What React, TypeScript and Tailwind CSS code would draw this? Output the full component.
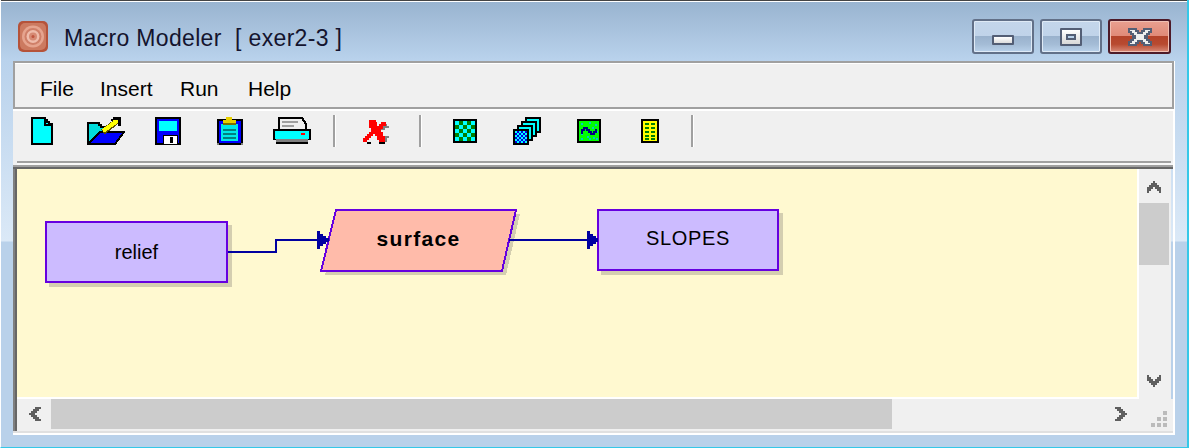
import React from "react";

const font = "font-['Liberation_Sans',Arial,sans-serif]";

function FileIcon() {
  return (
    <svg width="22" height="28" viewBox="0 0 22 28" shapeRendering="crispEdges">
      <path d="M1 1H14V3H16V5H18V7H21V27H1Z" fill="#00ffff" stroke="#000" strokeWidth="2" />
      <path d="M14 1V8H21" fill="none" stroke="#000" strokeWidth="2" />
    </svg>
  );
}
function FolderIcon() {
  return (
    <svg width="38" height="28" viewBox="0 0 38 28" shapeRendering="crispEdges">
      <path d="M1 27V6H12V8H14V10H22V16H13V27Z" fill="#00dcdc" stroke="#000" strokeWidth="2" />
      <path d="M1 27L13 15H37L28 27Z" fill="#0000ff" stroke="#000" strokeWidth="2" />
      <path d="M16 15L30 4" stroke="#605000" strokeWidth="6" />
      <path d="M16 14L30 4" stroke="#ffff00" strokeWidth="4" />
      <path d="M24 2H26V0H31V0H34V9H31V4H24Z" fill="#000" />
      <path d="M26 3H31V5H26Z" fill="#ffff00" />
    </svg>
  );
}
function SaveIcon() {
  return (
    <svg width="26" height="28" viewBox="0 0 26 28" shapeRendering="crispEdges">
      <rect width="26" height="28" fill="#000" />
      <rect x="2" y="2" width="22" height="24" fill="#0000ff" />
      <rect x="4" y="4" width="18" height="10" fill="#00ffff" />
      <rect x="8" y="18" width="15" height="10" fill="#000" />
      <rect x="9" y="19" width="13" height="8" fill="#ffffff" />
      <rect x="15" y="20" width="3" height="6" fill="#000" />
    </svg>
  );
}
function ClipIcon() {
  return (
    <svg width="26" height="28" viewBox="0 0 26 28" shapeRendering="crispEdges">
      <rect x="0" y="2" width="26" height="26" fill="#000" />
      <rect x="0" y="26" width="2" height="2" fill="#808080" />
      <rect x="24" y="26" width="2" height="2" fill="#808080" />
      <rect x="2" y="4" width="22" height="22" fill="#0000ff" />
      <rect x="4" y="7" width="17" height="17" fill="#00e8e8" />
      <rect x="6" y="12" width="13" height="2" fill="#008080" />
      <rect x="6" y="16" width="13" height="2" fill="#008080" />
      <rect x="6" y="20" width="13" height="2" fill="#008080" />
      <rect x="9" y="0" width="6" height="3" fill="#e8d000" />
      <rect x="6" y="3" width="13" height="4" fill="#e8d000" />
      <rect x="6" y="6" width="13" height="2" fill="#807000" />
    </svg>
  );
}
function PrinterIcon() {
  return (
    <svg width="38" height="27" viewBox="0 0 38 27" shapeRendering="crispEdges">
      <path d="M6 13V1H29L33 7V13Z" fill="#f0f0f0" stroke="#000" strokeWidth="2" />
      <rect x="9" y="4" width="16" height="2" fill="#a0a0a0" />
      <rect x="9" y="8" width="12" height="2" fill="#a0a0a0" />
      <rect x="0" y="12" width="38" height="11" fill="#000" />
      <rect x="2" y="14" width="34" height="8" fill="#00ffff" />
      <rect x="28" y="16" width="4" height="2" fill="#ff0000" />
      <rect x="3" y="22" width="32" height="5" fill="#000" />
      <rect x="3" y="22" width="32" height="3" fill="#808080" />
    </svg>
  );
}
function DeleteIcon() {
  return (
    <svg width="26" height="24" viewBox="0 0 26 24" shapeRendering="crispEdges">
      <path d="M10 4H24V6H26V8H22V10H18V4Z" fill="#808080" />
      <path d="M20 16H26V18H24V22H16V18H20Z" fill="#808080" />
      <path d="M4 22H8V24H4Z" fill="#000" />
      <path d="M16 20H22V24H16Z" fill="#000" />
      <path d="M6 0H13V2H14V6H16V4H18V2H23V6H20V9H18V12H20V16H22V22H16V20H14V16H12V14H10V16H8V18H6V20H4V22H0V18H2V16H4V14H6V12H8V8H6Z" fill="#ff0000" />
    </svg>
  );
}
function CheckerIcon() {
  const cells = [];
  for (let r = 0; r < 5; r++)
    for (let c = 0; c < 5; c++)
      cells.push(<rect key={`${r}-${c}`} x={2 + c * 4} y={2 + r * 4} width="4" height="4" fill={(r + c) % 2 === 0 ? "#00ffff" : "#008000"} />);
  return (
    <svg width="24" height="24" viewBox="0 0 24 24" shapeRendering="crispEdges">
      <rect width="24" height="24" fill="#000" />
      {cells}
    </svg>
  );
}
function StackIcon() {
  const fine = [];
  for (let r = 0; r < 6; r++)
    for (let c = 0; c < 6; c++)
      fine.push(<rect key={`${r}-${c}`} x={2 + c * 2} y={14 + r * 2} width="2" height="2" fill={(r + c) % 2 === 0 ? "#00ffff" : "#0000e0"} />);
  const layers: [number, number][] = [[12, 0], [8, 4], [4, 8]];
  return (
    <svg width="28" height="28" viewBox="0 0 28 28" shapeRendering="crispEdges">
      {layers.map(([x, y]) => (
        <g key={x}>
          <rect x={x} y={y} width="16" height="16" fill="#000" />
          <rect x={x + 2} y={y + 2} width="12" height="12" fill="#00ffff" />
        </g>
      ))}
      <rect x="0" y="12" width="16" height="16" fill="#000" />
      {fine}
    </svg>
  );
}
function GreenIcon() {
  const dots = [[4, 4], [12, 3], [18, 5], [6, 8], [15, 8], [19, 12], [4, 14], [10, 17], [16, 18], [4, 19], [12, 19], [19, 19]];
  return (
    <svg width="24" height="24" viewBox="0 0 24 24" shapeRendering="crispEdges">
      <rect width="24" height="24" fill="#000" />
      <rect x="2" y="2" width="20" height="20" fill="#00ff00" />
      {dots.map(([x, y]) => (
        <rect key={`${x}-${y}`} x={x} y={y} width="2" height="2" fill="#00c8c8" />
      ))}
      <path d="M5 15V11H7V9H10V11H12V13H14V15H17V13H19V10" fill="none" stroke="#000080" strokeWidth="2" />
    </svg>
  );
}
function YellowIcon() {
  const rows = [4, 8, 12, 16, 19];
  return (
    <svg width="18" height="24" viewBox="0 0 18 24" shapeRendering="crispEdges">
      <rect width="18" height="24" fill="#000" />
      <rect x="2" y="2" width="14" height="20" fill="#ffff00" />
      {rows.map((y) => (
        <g key={y}>
          <rect x="4" y={y} width="4" height="2" fill="#008000" />
          <rect x="10" y={y} width="4" height="2" fill="#008000" />
        </g>
      ))}
    </svg>
  );
}

function TitleIcon() {
  return (
    <svg width="30" height="31" viewBox="0 0 30 31">
      <rect width="30" height="31" rx="5" fill="#b5533a" />
      <rect x="2" y="2" width="26" height="27" rx="5" fill="#cc7a60" />
      <circle cx="15" cy="15.5" r="11" fill="#e6a48e" />
      <circle cx="15" cy="15.5" r="8.5" fill="#cf7f68" />
      <circle cx="15" cy="15.5" r="6.5" fill="#efbcab" />
      <circle cx="15" cy="15.5" r="4" fill="#d68a74" />
      <circle cx="15" cy="15.5" r="1.5" fill="#c0553e" />
    </svg>
  );
}

function Sep({ ml }: { ml: string }) {
  return <div className={`h-[32px] w-[3px] border-r border-white bg-[#a0a0a0] ${ml}`} />;
}

function Chevron({ d, w, h }: { d: string; w: number; h: number }) {
  return (
    <svg width={w} height={h} viewBox={`0 0 ${w} ${h}`} shapeRendering="crispEdges">
      <path d={d} fill="#5f5f5f" />
    </svg>
  );
}

function Node({ className, children }: { className: string; children: React.ReactNode }) {
  return (
    <div className={`absolute flex items-center justify-center border-2 border-[#6600e0] bg-[#ccbbff] text-[20px] text-black shadow-[4px_4px_0_#d4ceb0] ${className}`}>
      {children}
    </div>
  );
}

export default function App() {
  return (
    <div className={`${font} relative flex h-[448px] w-[1189px] flex-col overflow-hidden border-r-2 border-b border-l border-[#35c8e8] border-l-white bg-[linear-gradient(to_bottom,#98b3cf_0px,#b9d2ec_60px,#dbe9f7_241px,#b9d1ea_242px)]`}>
      <div className="h-px bg-[#444]" />
      <div className="h-px bg-white" />

      {/* Title bar */}
      <div className="flex h-[59px] items-start">
        <div className="ml-[17px] mt-[19px]"><TitleIcon /></div>
        <div className="ml-[16px] mt-[21px] whitespace-pre text-[23px] leading-[30px] tracking-[0.33px] text-[#14142e]">Macro Modeler  [ exer2-3 ]</div>
        <div className="ml-auto mr-[16px] mt-[17px] flex gap-[6px]">
          <div className="flex h-[35px] w-[62px] items-center justify-center rounded-[3px] border-2 border-[#627088] bg-[linear-gradient(to_bottom,#c4d6eb_0%,#c0d3e9_48%,#9ab2cd_50%,#a4bcd6_75%,#b9d1ea_100%)] shadow-[inset_0_0_0_1px_#dfeaf6]">
            <div className="mt-[6px] h-[10px] w-[22px] rounded-[1px] border-2 border-[#535e75] bg-[linear-gradient(to_bottom,#ffffff,#dddddd)]" />
          </div>
          <div className="flex h-[35px] w-[62px] items-center justify-center rounded-[3px] border-2 border-[#627088] bg-[linear-gradient(to_bottom,#c4d6eb_0%,#c0d3e9_48%,#9ab2cd_50%,#a4bcd6_75%,#b9d1ea_100%)] shadow-[inset_0_0_0_1px_#dfeaf6]">
            <div className="flex h-[18px] w-[22px] items-center justify-center rounded-[1px] border-2 border-[#535e75] bg-[linear-gradient(to_bottom,#ffffff,#d8d8d8)]">
              <div className="h-[6px] w-[10px] border-2 border-[#535e75] bg-[#b9d1ea]" />
            </div>
          </div>
          <div className="flex h-[35px] w-[63px] items-center justify-center rounded-[3px] border-2 border-[#4d1a28] bg-[linear-gradient(to_bottom,#e9a090_0%,#e08a78_48%,#b4432a_50%,#b84a30_75%,#d88a78_100%)] shadow-[inset_0_0_0_1px_#f0c0b4]">
            <svg width="24" height="18" viewBox="0 0 24 18" shapeRendering="crispEdges">
              <path d="M1 1H8V3H10V5H14V3H16V1H23V4H21V6H19V8H17V10H19V12H21V14H23V17H16V15H14V13H10V15H8V17H1V14H3V12H5V10H7V8H5V6H3V4H1Z" fill="#eeeeee" stroke="#535e75" strokeWidth="2" />
            </svg>
          </div>
        </div>
      </div>

      {/* Panel */}
      <div className="ml-[12px] flex h-[374px] w-[1162px] flex-col border-r-2 border-b-2 border-white">
        {/* Menu */}
        <div className="-mr-px flex h-[48px] items-center border-2 border-[#a0a0a0] bg-[#f0f0f0] pt-[8px] text-[21px] leading-[24px] text-black shadow-[inset_0_1px_0_#ffffff]">
          <span className="ml-[25px] w-[60px]">File</span>
          <span className="w-[80px]">Insert</span>
          <span className="w-[68px]">Run</span>
          <span>Help</span>
        </div>

        {/* Toolbar */}
        <div className="flex h-[52px] items-start border-t-2 border-white bg-[#f0f0f0] pt-[6px]">
          <div className="ml-[18px]"><FileIcon /></div>
          <div className="ml-[34px]"><FolderIcon /></div>
          <div className="ml-[30px]"><SaveIcon /></div>
          <div className="ml-[36px]"><ClipIcon /></div>
          <div className="ml-[30px]"><PrinterIcon /></div>
          <Sep ml="ml-[22px] -mt-[2px]" />
          <div className="ml-[27px] mt-[3px]"><DeleteIcon /></div>
          <Sep ml="ml-[30px] -mt-[2px]" />
          <div className="ml-[31px] mt-[2px]"><CheckerIcon /></div>
          <div className="ml-[36px]"><StackIcon /></div>
          <div className="ml-[36px] mt-[2px]"><GreenIcon /></div>
          <div className="ml-[40px] mt-[2px]"><YellowIcon /></div>
          <Sep ml="ml-[32px] -mt-[2px]" />
        </div>

        {/* Separator lines */}
        <div className="h-[2px] bg-[#f0f0f0] pl-[4px]"><div className="mr-[2px] h-[2px] bg-[#a0a0a0]" /></div>
        <div className="h-[2px] bg-[#f0f0f0] pl-[4px]"><div className="h-[2px] bg-[#f8f8f8]" /></div>
        <div className="h-[2px] bg-[#a0a0a0]" />
        <div className="h-[2px] bg-[#666666]" />

        {/* Work area */}
        <div className="flex h-[230px]">
          <div className="w-[2px] bg-[#808080]" />
          <div className="w-[2px] bg-[#666666]" />
          <div className="relative h-[230px] w-[1122px] border-r-2 border-b-2 border-white bg-[#fff9d0]">
            <svg className="absolute left-0 top-0" width="1120" height="228" viewBox="0 0 1120 228" shapeRendering="crispEdges">
              <polygon points="319,41 499,41 485,102 304,102" transform="translate(4,4)" fill="#d4ceb0" />
              <polygon points="319,41 499,41 485,102 304,102" fill="#ffbbaa" stroke="#6600e0" strokeWidth="2" />
            </svg>
            <Node className="left-[28px] top-[52px] h-[62px] w-[183px]"><span>relief</span></Node>
            <Node className="left-[580px] top-[40px] h-[62px] w-[182px] pb-[4px]"><span className="tracking-[0.7px]">SLOPES</span></Node>
            <svg className="absolute left-0 top-0" width="1120" height="228" viewBox="0 0 1120 228" shapeRendering="crispEdges">
              <path d="M211 83H259V71H302" fill="none" stroke="#0000a0" strokeWidth="2" />
              <path d="M300 62H303V65H306V67H309V69H312V73H309V75H306V77H303V80H300Z" fill="#0000a0" />
              <path d="M492 71H572" fill="none" stroke="#0000a0" strokeWidth="2" />
              <path d="M570 62H573V65H576V67H579V69H581V73H579V75H576V77H573V80H570Z" fill="#0000a0" />
            </svg>
            <div className="absolute left-[314px] top-[40px] flex h-[62px] w-[175px] items-center justify-center pb-[2px] text-[21px] font-bold tracking-[1.3px] text-black">surface</div>
          </div>
          <div className="flex w-[32px] flex-col bg-[#f0f0f0]">
            <div className="flex h-[34px] items-start justify-center pt-[12px] pr-[2px]">
              <Chevron w={14} h={12} d="M6 0H8V2H10V4H12V6H14V12H12V10H10V8H8V6H6V8H4V10H2V12H0V6H2V4H4V2H6Z" />
            </div>
            <div className="h-[62px] w-[30px] bg-[#cccccc]" />
            <div className="flex flex-1 items-end justify-center pb-[12px] pr-[2px]">
              <Chevron w={14} h={12} d="M0 0H2V2H4V4H6V6H8V4H10V2H12V0H14V6H12V8H10V10H8V12H6V10H4V8H2V6H0Z" />
            </div>
          </div>
        </div>

        {/* Horizontal scrollbar */}
        <div className="flex h-[32px] bg-[#f0f0f0]">
          <div className="w-[2px] bg-[#808080]" />
          <div className="w-[2px] bg-[#666666]" />
          <div className="flex w-[34px] items-start justify-center pt-[8px] pl-[2px]">
            <Chevron w={12} h={14} d="M6 0H12V2H10V4H8V6H6V8H8V10H10V12H12V14H6V12H4V10H2V8H0V6H2V4H4V2H6Z" />
          </div>
          <div className="h-[30px] w-[841px] bg-[#cccccc]" />
          <div className="flex flex-1 items-start pl-[223px] pt-[8px]">
            <Chevron w={12} h={14} d="M0 0H6V2H8V4H10V6H12V8H10V10H8V12H6V14H0V12H2V10H4V8H6V6H4V4H2V2H0Z" />
          </div>
          <div className="relative w-[22px]">
            <svg className="absolute left-0 top-[12px]" width="16" height="16" viewBox="0 0 16 16" shapeRendering="crispEdges">
              {[[12, 0], [6, 6], [12, 6], [0, 12], [6, 12], [12, 12]].map(([x, y]) => (
                <rect key={`${x}-${y}`} x={x} y={y} width="4" height="4" fill="#bbbbbb" />
              ))}
            </svg>
          </div>
        </div>
        <div className="h-[2px] bg-[#e0e0e0]" />
      </div>
    </div>
  );
}
